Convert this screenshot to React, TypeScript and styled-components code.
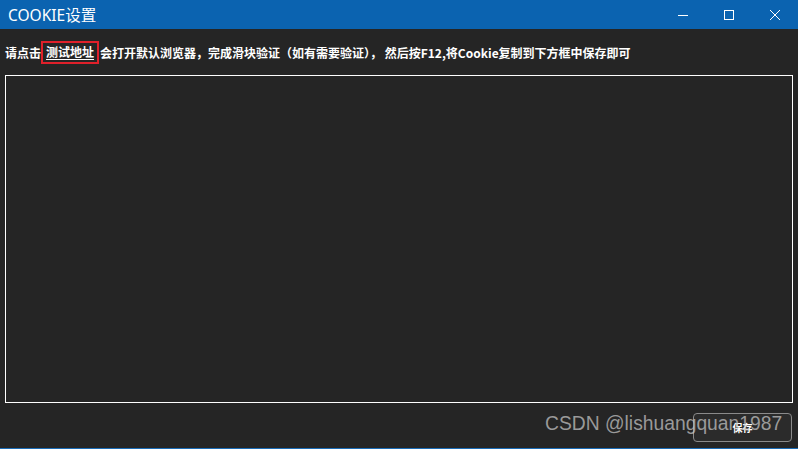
import React from "react";
import styled, { createGlobalStyle } from "styled-components";

const Global = createGlobalStyle`
  html, body { margin: 0; padding: 0; background: #252525; }
  body { width: 798px; height: 449px; overflow: hidden; }
  * { box-sizing: border-box; }
`;

const Window = styled.div`
  width: 798px;
  height: 449px;
  display: flex;
  flex-direction: column;
  background: #252525;
  border-bottom: 1px solid #1a6bb5;
  font-family: "Noto Sans CJK SC", "Noto Sans", sans-serif;
  position: relative;
`;

const TitleBar = styled.div`
  height: 29px;
  background: #0b63b0;
  display: flex;
  align-items: center;
  padding-left: 8px;
  flex-shrink: 0;
`;

const Title = styled.div`
  color: #ffffff;
  font-size: 15.5px;
  font-family: "Noto Sans", "Noto Sans CJK SC", sans-serif;
  flex: 1;
`;

const Controls = styled.div`
  display: flex;
  height: 29px;
`;

const CtrlBtn = styled.div`
  width: 46px;
  height: 29px;
  display: flex;
  align-items: center;
  justify-content: center;
`;

const Body = styled.div`
  flex: 1;
  display: flex;
  flex-direction: column;
  padding: 11px 5px 0 5px;
`;

const Hint = styled.div`
  display: flex;
  align-items: center;
  color: #ffffff;
  font-size: 12px;
  font-weight: 700;
  height: 24px;
  white-space: pre;
`;

const LinkBox = styled.span`
  border: 2px solid #e0202a;
  padding: 1px 3px 2px 3px;
  margin: 0 1px 0 0;
  height: 23px;
  display: inline-flex;
  align-items: center;
`;

const Link = styled.span`
  text-decoration: underline;
  text-underline-offset: 2px;
`;

const TextArea = styled.textarea`
  margin-top: 11px;
  width: 788px;
  height: 328px;
  background: #252525;
  border: 1px solid #ffffff;
  resize: none;
  outline: none;
  color: #fff;
  flex-shrink: 0;
`;

const Footer = styled.div`
  display: flex;
  justify-content: flex-end;
  align-items: center;
  padding-top: 10px;
  padding-right: 1px;
`;

const SaveButton = styled.button`
  width: 99px;
  height: 29px;
  background: #2b2b2b;
  border: 1px solid #8a8a8a;
  border-radius: 4px;
  color: #ffffff;
  font-size: 10px;
  font-weight: 700;
  font-family: "Noto Sans CJK SC", sans-serif;
  padding: 0;
`;

const Watermark = styled.div`
  position: absolute;
  left: 545px;
  top: 413px;
  font-family: "Liberation Sans", Arial, sans-serif;
  font-size: 19.3px;
  color: rgba(200, 200, 200, 0.72);
  pointer-events: none;
  white-space: nowrap;
`;

export default function App() {
  return (
    <>
      <Global />
      <Window>
        <TitleBar>
          <Title>COOKIE设置</Title>
          <Controls>
            <CtrlBtn>
              <svg width="10" height="10" viewBox="0 0 10 10">
                <line x1="0" y1="5.5" x2="10" y2="5.5" stroke="#fff" strokeWidth="1" />
              </svg>
            </CtrlBtn>
            <CtrlBtn>
              <svg width="10" height="10" viewBox="0 0 10 10">
                <rect x="0.5" y="0.5" width="9" height="9" fill="none" stroke="#fff" strokeWidth="1" />
              </svg>
            </CtrlBtn>
            <CtrlBtn>
              <svg width="10" height="10" viewBox="0 0 10 10">
                <path d="M0 0 L10 10 M10 0 L0 10" stroke="#fff" strokeWidth="1" />
              </svg>
            </CtrlBtn>
          </Controls>
        </TitleBar>
        <Body>
          <Hint>
            {"请点击"}
            <LinkBox>
              <Link>测试地址</Link>
            </LinkBox>
            {"会打开默认浏览器，完成滑块验证（如有需要验证）， 然后按F12,将Cookie复制到下方框中保存即可"}
          </Hint>
          <TextArea />
          <Footer>
            <SaveButton>保存</SaveButton>
          </Footer>
        </Body>
        <Watermark>CSDN @lishuangquan1987</Watermark>
      </Window>
    </>
  );
}
